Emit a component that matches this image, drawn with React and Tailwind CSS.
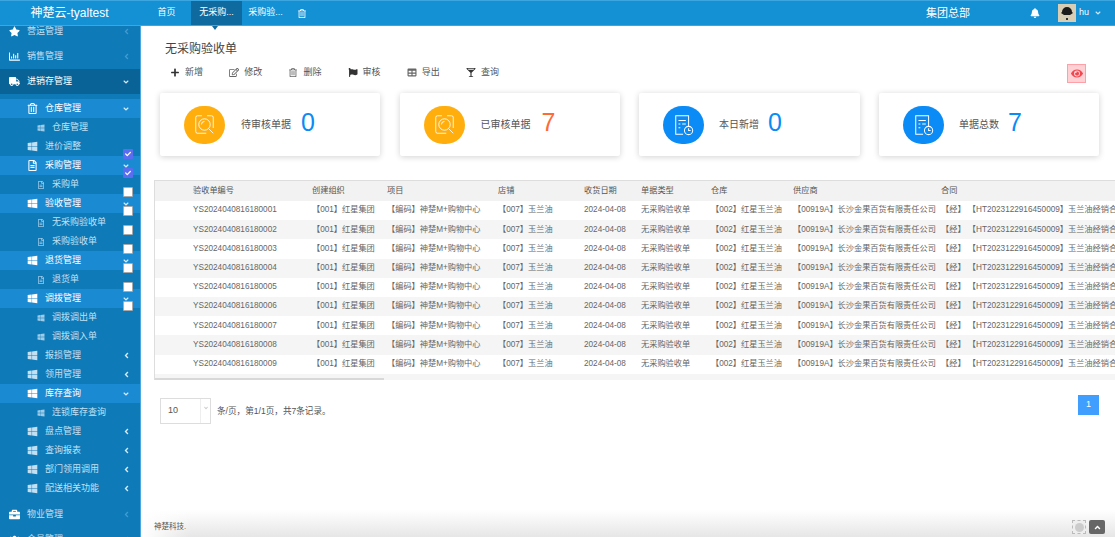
import React from 'react';
import {
    FaStar, FaRegChartBar, FaTruck, FaWindows, FaRegFileAlt, FaRegTrashAlt, FaAngleLeft, FaAngleDown,
    FaBriefcase, FaPlus, FaRegEdit, FaFlag, FaTable, FaGlassMartiniAlt, FaBell, FaEye, FaCheck, FaUsers,
} from 'react-icons/fa';

const FONT = "font-['Liberation_Sans','Noto_Sans_CJK_SC',sans-serif]";

// sidebar rows, top to bottom
const menu = [
    { label: '营运管理', level: 0, icon: FaStar, arrow: 'left', dim: true },
    { label: '销售管理', level: 0, icon: FaRegChartBar, arrow: 'left', dim: true },
    { label: '进销存管理', level: 0, icon: FaTruck, arrow: 'down', dark: true },
    { spacer: true },
    { label: '仓库管理', level: 1, icon: FaRegTrashAlt, arrow: 'down', active: true },
    { label: '仓库管理', level: 2, icon: FaWindows },
    { label: '进价调整', level: 1, icon: FaWindows },
    { label: '采购管理', level: 1, icon: FaRegFileAlt, arrow: 'down', active: true },
    { label: '采购单', level: 2, icon: FaRegFileAlt },
    { label: '验收管理', level: 1, icon: FaWindows, arrow: 'down', active: true },
    { label: '无采购验收单', level: 2, icon: FaRegFileAlt },
    { label: '采购验收单', level: 2, icon: FaRegFileAlt },
    { label: '退货管理', level: 1, icon: FaWindows, arrow: 'down', active: true },
    { label: '退货单', level: 2, icon: FaRegFileAlt },
    { label: '调拨管理', level: 1, icon: FaWindows, arrow: 'down', active: true },
    { label: '调拨调出单', level: 2, icon: FaWindows },
    { label: '调拨调入单', level: 2, icon: FaWindows },
    { label: '报损管理', level: 1, icon: FaWindows, arrow: 'left' },
    { label: '领用管理', level: 1, icon: FaWindows, arrow: 'left' },
    { label: '库存查询', level: 1, icon: FaWindows, arrow: 'down', active: true },
    { label: '连锁库存查询', level: 2, icon: FaWindows },
    { label: '盘点管理', level: 1, icon: FaWindows, arrow: 'left' },
    { label: '查询报表', level: 1, icon: FaWindows, arrow: 'left' },
    { label: '部门领用调用', level: 1, icon: FaWindows, arrow: 'left' },
    { label: '配送相关功能', level: 1, icon: FaWindows, arrow: 'left' },
    { gap: true },
    { label: '物业管理', level: 0, icon: FaBriefcase, arrow: 'left', dim: true },
    { label: '会员管理', level: 0, icon: FaUsers, arrow: 'left', dim: true },
];

const toolbar = [
    { label: '新增', icon: FaPlus },
    { label: '修改', icon: FaRegEdit },
    { label: '删除', icon: FaRegTrashAlt },
    { label: '审核', icon: FaFlag },
    { label: '导出', icon: FaTable },
    { label: '查询', icon: FaGlassMartiniAlt },
];

const columns = [
    { label: '验收单编号', w: 'w-[157px]', pl: 'pl-[38px]' },
    { label: '创建组织', w: 'w-[75px]', pl: 'pl-0' },
    { label: '项目', w: 'w-[111px]', pl: 'pl-0' },
    { label: '店铺', w: 'w-[86px]', pl: 'pl-0' },
    { label: '收货日期', w: 'w-[57px]', pl: 'pl-0' },
    { label: '单据类型', w: 'w-[70px]', pl: 'pl-0' },
    { label: '仓库', w: 'w-[82px]', pl: 'pl-0' },
    { label: '供应商', w: 'w-[148px]', pl: 'pl-0' },
    { label: '合同', w: 'w-[175px]', pl: 'pl-0' },
];

const rows = [1, 2, 3, 4, 5, 6, 7, 8, 9].map((n) => [
    `YS202404081618000${n}`,
    '【001】红星集团',
    '【编码】神楚M+购物中心',
    '【007】玉兰油',
    '2024-04-08',
    '无采购验收单',
    '【002】红星玉兰油',
    '【00919A】长沙金果百货有限责任公司',
    '【经】 【HT2023122916450009】玉兰油经销合同',
]);

const SearchDoc = () => (
    <svg viewBox="0 0 24 24" className="h-[21px] w-[21px]" fill="none" stroke="white" strokeWidth="1">
        <path d="M9 2H4a2 2 0 0 0-2 2v16a2 2 0 0 0 2 2h10M15 2h5a2 2 0 0 1 2 2v12" />
        <circle cx="12" cy="12" r="6.5" />
        <path d="M8.5 12a3.5 3.5 0 0 1 3.5-3.5M17 17l5 5" />
    </svg>
);

const ClockDoc = () => (
    <svg viewBox="0 0 24 24" className="h-[22px] w-[22px]" fill="none" stroke="white" strokeWidth="1.1">
        <path d="M11 22H3V2h14v11" />
        <path d="M6 7h8M6 11h2M10 11h4M6 15h2" />
        <circle cx="17" cy="18" r="4.5" />
        <path d="M17 15.5V18h2.2" />
    </svg>
);

const StatCard = ({ label, value, yellow, numColor, width, textLeft, numLeft }) => (
    <div className={`flex h-[63px] ${width} items-center rounded-[2px] bg-white shadow-[0_1px_6px_rgba(0,0,0,0.18)]`}>
        <div className={`ml-[24px] flex h-[38px] w-[41px] items-center justify-center rounded-full ${yellow ? 'bg-[#ffae0d]' : 'bg-[#0a8bf5]'}`}>
            {yellow ? <SearchDoc /> : <ClockDoc />}
        </div>
        <span className={`${textLeft} text-[10px] text-[#555]`}>{label}</span>
        <span className={`${numLeft} -mt-[5px] text-[25px] leading-none ${numColor}`}>{value}</span>
    </div>
);

const MenuRow = ({ item }) => {
    if (item.spacer) return <div className="h-[5px]" />;
    if (item.gap) return <div className="h-[4px]" />;
    const Icon = item.icon;
    const height = item.level === 0 ? 'h-[25px]' : 'h-[19px]';
    const bg = item.dark ? 'bg-[#0a6396]' : item.active ? 'bg-[#1a8bd3]' : '';
    const color = item.dim || item.level === 2 || !item.active ? 'text-[#c3e0f3]' : 'text-white';
    const textColor = item.dark ? 'text-white' : color;
    return (
        <div className={`flex ${height} items-center ${bg} ${textColor} text-[9px]`}>
            {item.level === 0 && (
                <span className="flex w-[27px] justify-center pl-[1px] text-white"><Icon className="h-[11px] w-[11px]" /></span>
            )}
            {item.level === 1 && (
                <span className="ml-[27px] mr-[8px] flex w-[10px] justify-center"><Icon className="h-[11px] w-[11px] shrink-0" /></span>
            )}
            {item.level === 2 && (
                <span className="ml-[37px] mr-[8px] flex w-[7px] justify-center opacity-80"><Icon className="h-[8px] w-[8px] shrink-0" /></span>
            )}
            <span>{item.label}</span>
            {item.arrow === 'left' && (
                <FaAngleLeft className={`ml-auto mr-[10px] h-[9px] w-[7px] ${item.dim ? 'text-[#3f9bd0]' : 'text-[#d7ebf8]'}`} />
            )}
            {item.arrow === 'down' && <FaAngleDown className="ml-auto mr-[10px] h-[8px] w-[8px] text-[#d7ebf8]" />}
        </div>
    );
};

const TableCell = ({ header, col, children }) => (
    <td className={`${col.w} ${col.pl} overflow-hidden whitespace-nowrap ${header ? 'text-[#555]' : 'text-[#666]'}`}>
        {children}
    </td>
);

export default function App() {
    return (
        <div className={`flex h-[537px] w-[1115px] flex-col overflow-hidden bg-white ${FONT}`}>
            {/* Top bar */}
            <header className="flex h-[26px] shrink-0 items-stretch border-y border-[#3ba6e0] bg-[#1490d4] text-white">
                <div className="flex w-[140px] items-center justify-center pr-[1px] text-[12px]">神楚云-tyaltest</div>
                <nav className="flex items-stretch text-[9px]">
                    <span className="flex w-[51px] items-center justify-center pl-[2px]">首页</span>
                    <span className="relative flex w-[51px] items-center justify-center bg-[#0f6b9f]">
                        无采购...
                        <i className="absolute -bottom-[5px] left-[21px] h-0 w-0 border-x-[3px] border-t-[4px] border-x-transparent border-t-[#0f6b9f]" />
                    </span>
                    <span className="flex w-[51px] items-center justify-center pr-[4px]">采购验...</span>
                    <span className="flex w-[18px] items-center justify-center"><FaRegTrashAlt className="h-[9px] w-[8px]" /></span>
                </nav>
                <div className="ml-auto flex items-center">
                    <span className="mr-[60px] text-[11px]">集团总部</span>
                    <FaBell className="mr-[18px] h-[10px] w-[10px]" />
                    <svg viewBox="0 0 18 18" className="h-[18px] w-[18px]">
                        <rect width="18" height="18" fill="#d8cdb5" />
                        <path d="M4 8a5 5 0 0 1 10 0l1 1-3 2H6L3 9z" fill="#1c1c1c" />
                        <rect x="8" y="14" width="2" height="2" fill="#333" />
                    </svg>
                    <span className="ml-[3px] text-[9px]">hu</span>
                    <FaAngleDown className="ml-[5px] mr-[13px] h-[8px] w-[8px] text-[#cfe8f7]" />
                </div>
            </header>

            <div className="relative flex min-h-0 flex-1">
                {/* Sidebar */}
                <aside className="w-[141px] shrink-0 overflow-hidden border-r border-[#4aa8de] bg-[#0e7ab8]">
                    <div className="-mt-[7px]">
                        {menu.map((item, i) => <MenuRow key={i} item={item} />)}
                    </div>
                </aside>

                {/* Stray checkboxes lying over the sidebar */}
                <div className="absolute left-[123px] top-[123px] flex flex-col gap-[9px]">
                    {[true, true, false, false, false, false, false, false, false].map((on, i) => (
                        <span
                            key={i}
                            className={`flex h-[10px] w-[10px] items-center justify-center rounded-[1px] ${on ? 'bg-[#5a6cf0]' : 'border border-[#aaa] bg-white'}`}
                        >
                            {on && <FaCheck className="h-[6px] w-[6px] text-white" />}
                        </span>
                    ))}
                </div>

                {/* Main */}
                <main className="flex min-w-0 flex-1 flex-col">
                    <h1 className="ml-[24px] mt-[16px] text-[12px] font-normal leading-[15px] text-[#444]">无采购验收单</h1>
                    <div className="relative ml-[29px] mt-[8px] flex h-[15px] items-center text-[9px] text-[#555]">
                        {toolbar.map(({ label, icon: Icon }) => (
                            <span key={label} className="flex w-[59.2px] items-center gap-[5px]">
                                <Icon className={`h-[9px] w-[10px] ${label === '新增' || label === '审核' || label === '查询' ? 'text-[#333]' : 'text-[#666]'}`} />
                                {label}
                            </span>
                        ))}
                        <span className="absolute left-[897px] -top-[1px] flex h-[19px] w-[19px] items-center justify-center border border-[#ffa0a8] bg-[#ffd0d4]">
                            <FaEye className="h-[11px] w-[12px] text-[#f0484f]" />
                        </span>
                    </div>

                    <div className="ml-[19px] mt-[13px] flex gap-[19.5px]">
                        <StatCard label="待审核单据" value="0" yellow numColor="text-[#0a8bf5]" width="w-[220px]" textLeft="ml-[16px]" numLeft="ml-[10px]" />
                        <StatCard label="已审核单据" value="7" yellow numColor="text-[#ff6b35]" width="w-[220px]" textLeft="ml-[16px]" numLeft="ml-[11px]" />
                        <StatCard label="本日新增" value="0" numColor="text-[#0a8bf5]" width="w-[220.5px]" textLeft="ml-[15px]" numLeft="ml-[9px]" />
                        <StatCard label="单据总数" value="7" numColor="text-[#0a8bf5]" width="w-[220px]" textLeft="ml-[15px]" numLeft="ml-[9px]" />
                    </div>

                    {/* Table */}
                    <div className="ml-[13px] mt-[24px] overflow-hidden border-l border-t border-[#ddd]">
                        <table className="w-[961px] table-fixed border-collapse text-[8.2px] leading-none">
                            <thead>
                                <tr className="h-[20px] bg-[#f2f2f2]">
                                    {columns.map((c) => <TableCell key={c.label} header col={c}>{c.label}</TableCell>)}
                                </tr>
                            </thead>
                            <tbody>
                                {rows.map((row, i) => (
                                    <tr key={row[0]} className={`h-[19.2px] ${i % 2 === 1 ? 'bg-[#f5f5f5]' : 'bg-white'}`}>
                                        {row.map((text, j) => <TableCell key={j} col={columns[j]}>{text}</TableCell>)}
                                    </tr>
                                ))}
                            </tbody>
                        </table>
                        <div className="h-[6px] bg-[#f5f5f5] pt-[4px]">
                            <div className="h-[2px] w-[229px] bg-[#d8d8d8]" />
                        </div>
                    </div>

                    {/* Pager */}
                    <div className="ml-[19px] mr-[16px] mt-[18px] flex items-start">
                        <div className="flex h-[26px] w-[51px] items-center border border-[#ddd] text-[9px] text-[#555]">
                            <span className="w-[39px] pl-[7px]">10</span>
                            <span className="flex h-full flex-1 justify-center border-l border-[#eee] pt-[6px]">
                                <FaAngleDown className="h-[6px] w-[6px] text-[#ccc]" />
                            </span>
                        </div>
                        <span className="ml-[6px] mt-[7px] text-[8.6px] text-[#555]">条/页，第1/1页，共7条记录。</span>
                        <span className="ml-auto -mt-[3px] flex h-[20px] w-[21px] items-center justify-center bg-[#409eff] text-[9px] text-white">1</span>
                    </div>

                    {/* Footer */}
                    <footer className="mt-auto flex h-[27px] items-end bg-[linear-gradient(to_right,white,transparent_50px),linear-gradient(to_bottom,white,#e6e6e6)] pb-[3px] pl-[13px] pr-[10px]">
                        <span className="mb-[2px] text-[7.5px] text-[#555]">神楚科技.</span>
                        <span className="ml-auto mr-[3px] flex h-[14px] w-[14px] items-center justify-center border border-dashed border-[#bbb] bg-[#eee]">
                            <i className="h-[9px] w-[9px] rounded-full bg-[#ccc]" />
                        </span>
                        <span className="flex h-[14px] w-[16px] items-center justify-center rounded-[2px] bg-[#666]">
                            <FaAngleDown className="h-[9px] w-[9px] rotate-180 text-white" />
                        </span>
                    </footer>
                </main>
            </div>
        </div>
    );
}
